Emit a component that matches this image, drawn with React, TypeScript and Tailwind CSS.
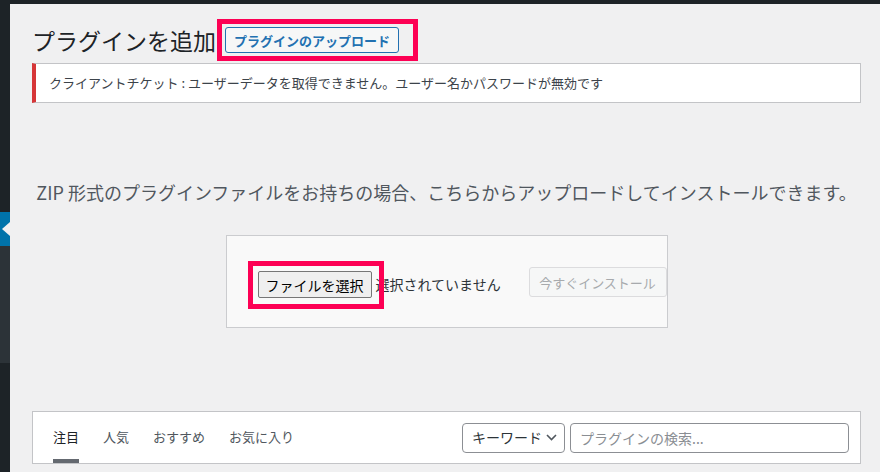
import { useState } from "react";

const tabs = ["注目", "人気", "おすすめ", "お気に入り"];

function Sidebar() {
  return (
    <div className="w-[10px] shrink-0 flex flex-col">
      <div className="h-[208px] bg-[#1d2327]" />
      <div className="h-[34px] bg-[#0073aa] flex items-center justify-end">
        <div className="w-0 h-0 border-y-[7px] border-y-transparent border-r-[8px] border-r-[#f0f0f1]" />
      </div>
      <div className="h-[117px] bg-[#2c3338]" />
      <div className="flex-1 bg-[#1d2327]" />
    </div>
  );
}

export default function App() {
  const [current, setCurrent] = useState(0);

  return (
    <div className="w-[880px] h-[472px] overflow-hidden bg-[#f0f0f1] flex flex-col font-['Noto_Sans_CJK_JP',sans-serif]">
      <div className="h-[4px] shrink-0 bg-[#1d2327]" />
      <div className="flex flex-1 min-h-0">
        <Sidebar />
        <main className="flex-1 pl-[22px] pr-[19px]">
          {/* Title row */}
          <div className="pt-[23px] flex items-center h-[49px]">
            <h1 className="text-[23px] leading-[26px] font-normal text-[#1d2327]">プラグインを追加</h1>
            <div className="relative ml-[9px]">
              <button className="h-[26px] w-[174px] rounded-[3px] border border-[#2271b1] bg-[#f6f7f7] text-[13px] font-semibold text-[#2271b1] leading-none">
                プラグインのアップロード
              </button>
              <div className="absolute -left-[8px] -top-[8px] -right-[19px] -bottom-[8px] border-[5px] border-[#fd0054] pointer-events-none" />
            </div>
          </div>

          {/* Error notice */}
          <div className="mt-[10px] h-[40px] bg-white border border-[#c3c4c7] border-l-4 border-l-[#d63638] flex items-center pl-[13px] text-[13px] text-[#3c434a]">
            クライアントチケット : ユーザーデータを取得できません。ユーザー名かパスワードが無効です
          </div>

          {/* Upload help */}
          <p className="mt-[76px] text-center text-[18px] leading-[27px] text-[#50575e]">
            ZIP 形式のプラグインファイルをお持ちの場合、こちらからアップロードしてインストールできます。
          </p>

          <div className="mt-[29px] mx-auto w-[442px] h-[93px] border border-[#cbcccf] bg-[#f9f9f9] flex items-start pl-[31px] pt-[31px] whitespace-nowrap">
            <div className="w-[269px] mt-[4px] flex items-center">
              <div className="relative">
                <button className="h-[27px] w-[114px] rounded-[2px] border border-[#767676] bg-[#efefef] text-[14px] text-black leading-none">
                  ファイルを選択
                </button>
                <div className="absolute -left-[10px] -top-[10px] -right-[12px] -bottom-[11px] border-[5px] border-[#fd0054] pointer-events-none" />
              </div>
              <span className="ml-[4px] text-[14px] text-[#2c3338]">選択されていません</span>
            </div>
            <button
              disabled
              className="ml-[4px] h-[30px] w-[138px] shrink-0 rounded-[3px] border border-[#dcdcde] bg-[#f6f7f7] text-[13px] text-[#a7aaad] leading-none"
            >
              今すぐインストール
            </button>
          </div>

          {/* Filter bar */}
          <div className="mt-[83px] h-[53px] bg-white border border-[#c3c4c7] flex items-stretch justify-between pl-[20px] pr-[11px]">
            <ul className="flex gap-[24px]">
              {tabs.map((t, i) => (
                <li
                  key={t}
                  onClick={() => setCurrent(i)}
                  className={`flex items-center pt-[2px] border-b-4 text-[13px] cursor-pointer ${
                    current === i ? "border-[#646970] text-[#1d2327]" : "border-transparent text-[#50575e]"
                  }`}
                >
                  {t}
                </li>
              ))}
            </ul>
            <div className="flex items-center gap-[5px]">
              <div className="h-[30px] w-[103px] rounded-[4px] border border-[#8c8f94] bg-white flex items-center justify-between pl-[9px] pr-[7px] text-[14px] text-[#2c3338]">
                <span>キーワード</span>
                <svg width="11" height="7" viewBox="0 0 11 7" fill="none">
                  <path d="M1 1l4.5 4.5L10 1" stroke="#50575e" strokeWidth="1.6" />
                </svg>
              </div>
              <input
                type="search"
                placeholder="プラグインの検索..."
                className="h-[30px] w-[279px] rounded-[4px] border border-[#8c8f94] bg-white pl-[9px] text-[14px] text-[#2c3338] placeholder:text-[#8a8e93] outline-none"
              />
            </div>
          </div>
        </main>
      </div>
    </div>
  );
}
